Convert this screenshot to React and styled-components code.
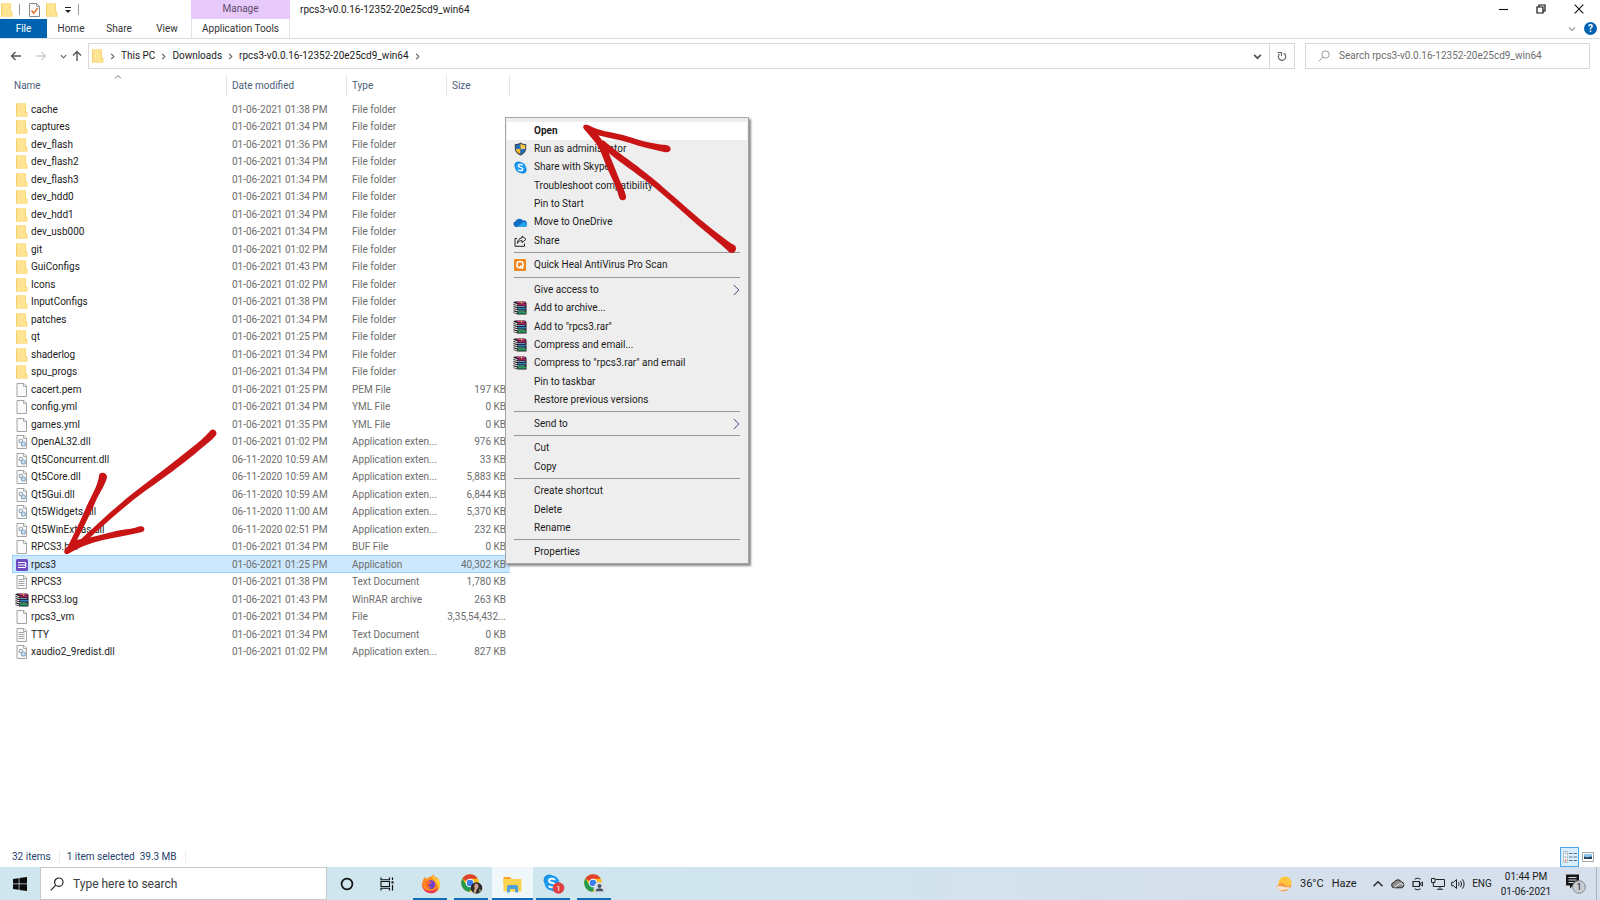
import React from 'react';
import styled, { createGlobalStyle, css } from 'styled-components';

const GlobalStyle = createGlobalStyle`
  *, *::before, *::after { box-sizing: border-box; }
  body { margin: 0; background: #fff; }
  body, button, input, table { font: 400 10px/16px Roboto, "Liberation Sans", sans-serif; color: #1b1b1b; }
  button { margin: 0; padding: 0; border: 0; background: none; }
  svg { display: block; flex: none; }
`;

/* ---------- icons ---------- */

const FolderIcon = () => (
  <svg width="12" height="14" viewBox="0 0 12 14">
    <path d="M.5 .5h9.500v8h1v5H.5z" fill="#ffe493" />
    <path d="M.5 .5v13" stroke="#f5cf66" />
    <path d="M.5 13.300h10.500M.5 .6h9" stroke="#f9dc86" strokeWidth=".8" />
    <path d="M9.500 .5v8.500M9 9h2v4.500" fill="none" stroke="#f9d570" strokeWidth=".9" />
  </svg>
);

const Sheet = ({ children }) => (
  <svg width="12" height="14" viewBox="0 0 12 14">
    <path d="M1 .5h7l2.500 2.500v10.500H1z" fill="#fbfbfb" stroke="#9a9a9a" strokeWidth=".9" />
    <path d="M7.500 .8v2.700h2.700" fill="none" stroke="#9a9a9a" strokeWidth=".8" />
    {children}
  </svg>
);

const DllIcon = () => (
  <Sheet>
    <circle cx="4.800" cy="6" r="1.800" fill="#e8eef2" stroke="#98a9b5" strokeWidth="1.100" />
    <circle cx="7.400" cy="9" r="2" fill="#cfe4f3" stroke="#86a6bf" strokeWidth="1.100" />
  </Sheet>
);

const TextIcon = () => (
  <Sheet>
    <path d="M2.500 4.500h6M2.500 6.500h6M2.500 8.500h6M2.500 10.500h6" stroke="#9b9b9b" strokeWidth=".9" />
  </Sheet>
);

const RarIcon = () => (
  <svg width="14" height="14" viewBox="0 0 14 14">
    <path d="M2.500 .5h9.500l1.500 1.500v11.500H4.500L.5 12V1z" fill="#231a1f" />
    <path d="M3 .8h8.500l1 1.500H5z" fill="#d23c88" />
    <path d="M5 2.800h8v1.700H5z" fill="#a81e5e" />
    <path d="M3 5.200h8.500l1 .9H5z" fill="#6fc3ee" />
    <path d="M5 6.800h8v1.700H5z" fill="#2d7fc4" />
    <path d="M3 9.500h8.500l1 .9H5z" fill="#5fd39a" />
    <path d="M5 10.900h8v1.700H5z" fill="#1f9b5f" />
    <path d="M.3 2.300l4 1.400M.3 4.500l4 .9M.3 6.500l4 1.300M.3 8.600l4 1.100M.3 10.700l4 1.500" stroke="#fff" strokeWidth="1" />
    <path d="M8 .6l1 2.300" stroke="#f0c34b" />
  </svg>
);

const RpcsIcon = () => (
  <svg width="12" height="12" viewBox="0 0 12 12">
    <rect width="12" height="12" rx="1.500" fill="#6d4bc3" />
    <path d="M2 3.500h6.500q1.500 0 1.500 1.200T8.500 6H2M8.500 6q1.500 0 1.500 1.200T8.500 8.500H2" fill="none" stroke="#fff" strokeWidth="1.100" />
  </svg>
);

const CheckDocIcon = () => (
  <svg width="11" height="14" viewBox="0 0 11 14">
    <path d="M.5 .5h7l3 3v10H.5z" fill="#fff" stroke="#8a8a8a" />
    <path d="M7.500 .5v3h3" fill="none" stroke="#8a8a8a" strokeWidth=".8" />
    <path d="M2.500 7.500l2.200 2.700L8.700 5" fill="none" stroke="#e0762b" strokeWidth="1.500" />
  </svg>
);

const CustomizeIcon = () => (
  <svg width="8" height="8" viewBox="0 0 8 8">
    <path d="M1 1.500h6" stroke="#222" />
    <path d="M1 4h6L4 7z" fill="#222" />
  </svg>
);

const Arrow = ({ dir, color }) => (
  <svg width="12" height="12" viewBox="0 0 12 12">
    <g transform={`rotate(${{ left: 0, up: 90, right: 180 }[dir]} 6 6)`}>
      <path d="M11 6H1.500M5.500 2L1.500 6l4 4" fill="none" stroke={color} strokeWidth="1.400" />
    </g>
  </svg>
);

const Chevron = ({ dir = 'down', size = 8, color = '#555', weight = 1.2 }) => (
  <svg width={size} height={size} viewBox="0 0 8 8">
    <g transform={`rotate(${{ down: 0, up: 180, right: -90 }[dir]} 4 4)`}>
      <path d="M1 2.500l3 3 3-3" fill="none" stroke={color} strokeWidth={weight} />
    </g>
  </svg>
);

const SubmenuIcon = () => (
  <svg width="7" height="12" viewBox="0 0 7 12">
    <path d="M.8 1l5 5-5 5" fill="none" stroke="#3e4a78" />
  </svg>
);

const RefreshIcon = () => (
  <svg width="10" height="11" viewBox="0 0 10 11">
    <path d="M2.500 3a3.700 3.700 0 1 0 4.200-.6" fill="none" stroke="#666" strokeWidth="1.200" />
    <path d="M.5 1.500h4v3.500" fill="none" stroke="#666" strokeWidth="1.200" />
  </svg>
);

const LensIcon = ({ size, color, weight }) => (
  <svg width={size} height={size} viewBox="0 0 14 14">
    <circle cx="8.800" cy="5.200" r="4.200" fill="none" stroke={color} strokeWidth={weight} />
    <path d="M5.800 8.200L.7 13.300" stroke={color} strokeWidth={weight} />
  </svg>
);

const MinimizeIcon = () => (
  <svg width="10" height="10" viewBox="0 0 10 10"><path d="M1 5.500h9" stroke="#111" strokeWidth="1.100" /></svg>
);
const RestoreIcon = () => (
  <svg width="10" height="10" viewBox="0 0 10 10">
    <path d="M1 3h6v6H1zM3 3V1h6v6H7" fill="none" stroke="#111" strokeWidth="1.200" />
  </svg>
);
const CloseIcon = () => (
  <svg width="10" height="10" viewBox="0 0 10 10"><path d="M.7 .7l8.600 8.600M9.300 .7L.7 9.300" stroke="#111" strokeWidth="1.100" /></svg>
);

const ShieldIcon = () => (
  <svg width="13" height="14" viewBox="0 0 13 14">
    <path d="M6.500 .5C5 1.600 3 2.100 .8 2.200v4.300c0 3.300 2.500 5.700 5.700 7 3.200-1.300 5.700-3.700 5.700-7V2.200C10 2.100 8 1.600 6.500 .5z" fill="#3b4653" />
    <path d="M6.500 1.700v5.300H1.800V3.200C3.500 3 5 2.600 6.500 1.700z" fill="#1f6fc0" />
    <path d="M6.500 1.700v5.300h4.700V3.200C9.500 3 8 2.600 6.500 1.700z" fill="#f7c948" />
    <path d="M6.500 7v5.300C4 11.200 2 9.500 1.800 7z" fill="#f7b92c" />
    <path d="M6.500 7v5.300c2.500-1.100 4.500-2.800 4.700-5.300z" fill="#1f6fc0" />
  </svg>
);

const SkypeMark = ({ size }) => (
  <svg width={size} height={size} viewBox="0 0 16 16">
    <circle cx="5.500" cy="5.500" r="5" fill="#1590e6" />
    <circle cx="10.500" cy="10.500" r="5" fill="#0f7fdc" />
    <circle cx="8" cy="8" r="6.600" fill="#1c9bf0" />
    <path d="M10.600 5.400C10 4.400 9 4.100 7.900 4.100c-1.500 0-2.500.7-2.500 1.800 0 2.700 5.300 1.300 5.300 4 0 1.200-1.200 2-2.700 2-1.300 0-2.300-.5-2.800-1.500" fill="none" stroke="#fff" strokeWidth="1.700" />
  </svg>
);

const OneDriveIcon = () => (
  <svg width="14" height="9" viewBox="0 0 14 9">
    <path d="M3 9a3 3 0 0 1-.6-5.800A4.400 4.400 0 0 1 10 2.500 3.300 3.300 0 0 1 11.500 9z" fill="#0f6cc0" />
    <path d="M4 9l5.500-4.500A3 3 0 0 1 14 7c0 1.200-1 2-2.200 2z" fill="#27a4ec" />
  </svg>
);

const ShareIcon = () => (
  <svg width="13" height="12" viewBox="0 0 13 12">
    <path d="M3 3.500H1v7.800h9.500V8.500" fill="none" stroke="#222" />
    <path d="M8 1l4 3.300-4 3.400V5.600C5.500 5.500 4.300 6.500 3.300 8.400 3.500 5 5.300 3.200 8 3z" fill="none" stroke="#222" />
  </svg>
);

const QuickHealIcon = () => (
  <svg width="12" height="12" viewBox="0 0 12 12">
    <rect width="12" height="12" rx="1" fill="#ee8a1d" />
    <circle cx="6" cy="5.700" r="3.100" fill="none" stroke="#fff" strokeWidth="1.500" />
    <path d="M6.300 6.500l2.700 3.300" stroke="#fff" strokeWidth="1.400" />
  </svg>
);

const DetailsViewIcon = () => (
  <svg width="14" height="12" viewBox="0 0 14 12">
    <path d="M.5 .5h4v11h-4z" fill="#fff" stroke="#a8b4bd" strokeWidth=".8" />
    <circle cx="2.500" cy="2.500" r=".9" fill="#9aaec0" />
    <circle cx="2.500" cy="6" r=".9" fill="#9aaec0" />
    <circle cx="2.500" cy="9.500" r=".9" fill="#c85a4a" />
    <path d="M6 2.500h3.500M10.500 2.500H14M6 6h3.500M10.500 6H14M6 9.500h3.500M10.500 9.500H14" stroke="#5f7484" />
  </svg>
);
const LargeViewIcon = () => (
  <svg width="12" height="10" viewBox="0 0 12 10">
    <path d="M.5 .5h11v9H.5z" fill="#fff" stroke="#a4a4a4" />
    <path d="M2 2h8v5H2z" fill="#8cc3ea" />
    <path d="M2 4.500l3 .8 5-.8V7H2z" fill="#24435f" />
  </svg>
);

const WindowsIcon = () => (
  <svg width="14" height="14" viewBox="0 0 14 14">
    <path d="M0 2l5.700-.8v5.400H0zM6.400 1.100L14 0v6.600H6.400zM0 7.300h5.700v5.400L0 12zM6.400 7.300H14V14l-7.600-1.100z" fill="#0b0b0b" />
  </svg>
);
const CortanaIcon = () => (
  <svg width="14" height="14" viewBox="0 0 14 14"><circle cx="7" cy="7" r="5.400" fill="none" stroke="#111" strokeWidth="1.700" /></svg>
);
const TaskViewIcon = () => (
  <svg width="14" height="14" viewBox="0 0 14 14">
    <path d="M1 .5v2.200h8.500V.5M1 13.500v-2.200h8.500v2.200M1 4.500h8.500v5H1z" fill="none" stroke="#111" strokeWidth="1.100" />
    <path d="M12.500 .5v2.500M12.500 8v5.500" stroke="#111" strokeWidth="1.200" />
    <path d="M11.500 4.300h2v2.200h-2z" fill="#111" />
  </svg>
);
const FirefoxIcon = () => (
  <svg width="20" height="20" viewBox="0 0 20 20">
    <path d="M2 6.500C2.300 5 3 4 4.200 2.800 4.400 4 5 4.600 6 5c1-1.500 2.600-2.300 4.500-2.500L12 .5c1.500 1.200 2.200 2.300 2.600 3.500l1-1c2.300 2.300 3.600 4.700 3.400 8.200C18.700 16 15 19.300 10.200 19.300S1 15.500 1 10.500C1 9 1.300 7.700 2 6.500z" fill="#ff8a1f" />
    <path d="M11.500 1c2 1.600 2.600 3.300 3 5 .7-.8.800-1.700.7-2.800 2.500 2.300 4 5 3.800 8-.2 2-1 3.800-2 5 .6-3-.2-6-2.500-8.500-1.800-2-3.500-3.700-3-6.700z" fill="#ffd23a" />
    <path d="M1.200 9c.3 5 3.500 8 8 8 3.500 0 6.300-1.500 7.800-4-.3 3.600-3.300 6.300-7 6.300-5 0-9.200-4-8.800-10.300z" fill="#f0315f" />
    <circle cx="10" cy="10.600" r="4.300" fill="#7542c8" />
    <path d="M4.500 7.500C7 6.800 9 7.500 10.800 8.600 9 9 9.200 10.200 7.500 10.600c-.5 2 1.200 2.900 3 2.700-3.500 2-6.500-.8-6-5.800z" fill="#ff6a2b" />
  </svg>
);

const ChromeBase = () => (
  <g>
    <circle cx="9" cy="9" r="8.800" fill="#fdbc0f" />
    <path d="M9 9L1.300 4.800A8.800 8.800 0 0 1 16.700 4.700H9z" fill="#e0402f" />
    <path d="M1.400 4.600A8.800 8.800 0 0 0 8.500 17.800L12.500 11 9 9 5.200 10.800z" fill="#249a50" />
    <circle cx="9" cy="9" r="4.300" fill="#fff" />
    <circle cx="9" cy="9" r="3.300" fill="#3b7ded" />
  </g>
);
const ChromePhotoIcon = () => (
  <svg width="22" height="20" viewBox="0 0 22 20">
    <ChromeBase />
    <circle cx="15.500" cy="14" r="5.800" fill="#2c2a2b" />
    <path d="M15 9.500c1.800 0 2.600 1.400 2.500 3-.1 1.400-.8 2.400-1.600 2.500l-1.200 4.400-2.200-1.200 1-3.600c-.7-2.800 0-5.100 1.500-5.100z" fill="#c9a08c" />
    <path d="M18 15l2.500 1-2 2.500z" fill="#8da26b" />
  </svg>
);
const ChromeGuestIcon = () => (
  <svg width="22" height="20" viewBox="0 0 22 20">
    <ChromeBase />
    <circle cx="15.500" cy="14" r="5.700" fill="#dfe3e8" stroke="#c3cad1" strokeWidth=".6" />
    <circle cx="15.500" cy="12" r="2" fill="#46566a" />
    <path d="M11.700 17.300c0-2.400 1.700-3 3.800-3s3.800.6 3.800 3z" fill="#46566a" />
  </svg>
);
const ExplorerIcon = () => (
  <svg width="19" height="18" viewBox="0 0 19 18">
    <path d="M.5 2h6.500l1.500 2H18v4H.5z" fill="#f3a92b" />
    <path d="M.5 4h18v12.500H.5z" fill="#fbd34f" />
    <path d="M4 17.500v-5.500q0-2 2-2h7q2 0 2 2v5.500h-2.800V14h-5.400v3.500z" fill="#4a9fdc" />
  </svg>
);
const SkypeTaskIcon = () => (
  <svg width="22" height="20" viewBox="0 0 22 20">
    <SkypeMark size={18} />
    <circle cx="15.500" cy="14" r="5.800" fill="#e03e3e" />
    <text x="15.500" y="17" textAnchor="middle" fontSize="8" fill="#fff">1</text>
  </svg>
);

const WeatherIcon = () => (
  <svg width="16" height="16" viewBox="0 0 16 16">
    <circle cx="9" cy="7" r="6.500" fill="#ffc53d" />
    <path d="M3 8.500c2-2.500 4.500-1.500 5.500 0s3.500 2 7 .5c-.5 2.500-2 3.500-4 3.500H3c-3 0-3.500-3 0-4z" fill="#f79a45" />
    <path d="M.8 9.500c2.500 1.300 4 .2 6.200 1s3.500 1 6.500 0c-1 2.500-3 4-6 4-3.500 0-6.700-1.500-6.700-5z" fill="#f7e6cf" />
    <path d="M3 13.500c2 1.200 4 .8 5.500.3s3-.5 4.300-1.300c-1 2-3 3-5.300 3-2 0-3.500-.8-4.500-2z" fill="#f3a256" />
  </svg>
);
const TrayCloudIcon = () => (
  <svg width="14" height="10" viewBox="0 0 14 10">
    <path d="M3.500 8.800a2.700 2.700 0 0 1-.3-5.400A4 4 0 0 1 10.500 3a3 3 0 0 1 .3 5.800z" fill="#909090" stroke="#222" />
    <path d="M3.500 8.300L9 4.500l3.500 1" stroke="#ececec" fill="none" />
  </svg>
);
const MeetNowIcon = () => (
  <svg width="12" height="14" viewBox="0 0 12 14">
    <path d="M2.500 2.200Q5.500 0 8.500 2.200M2.500 11.800Q5.500 14 8.500 11.800" fill="none" stroke="#222" />
    <path d="M1 4.500h6.500v5H1z" fill="none" stroke="#222" strokeWidth="1.200" />
    <path d="M7.500 7l3-2v4z" fill="none" stroke="#222" />
  </svg>
);
const NetworkIcon = () => (
  <svg width="14" height="12" viewBox="0 0 14 12">
    <path d="M4.500 1.500h9v7h-9M9 8.500v2.500M6 11.300h6" fill="none" stroke="#222" />
    <path d="M.5 .5h3.500v4H.5zM2.300 4.500v4h3" fill="none" stroke="#222" />
  </svg>
);
const SpeakerIcon = () => (
  <svg width="14" height="12" viewBox="0 0 14 12">
    <path d="M.7 4.200h2L5.500 1.500v9L2.700 7.800h-2z" fill="none" stroke="#222" />
    <path d="M7.500 4.300q1.200 1.700 0 3.400M9.500 2.800q2.200 3.200 0 6.400M11.500 1.300q3.200 4.700 0 9.400" fill="none" stroke="#222" />
  </svg>
);
const NotificationsIcon = () => (
  <svg width="20" height="20" viewBox="0 0 20 20">
    <path d="M0 .5h13v11H7l-3 3v-3H0z" fill="#161616" />
    <path d="M2.500 3.500h8M2.500 6h8M2.500 8.500h5" stroke="#d5e0ec" />
    <circle cx="13" cy="13" r="6.300" fill="#c9ccd0" stroke="#85888c" />
    <text x="13" y="16" textAnchor="middle" fontSize="9" fill="#111">1</text>
  </svg>
);

/* ---------- window frame ---------- */

const Desktop = styled.div`
  position: relative;
  display: flex;
  flex-direction: column;
  min-height: 100vh;
`;

const TitleBar = styled.header`
  display: flex;
  height: 19px;
`;

const QuickAccess = styled.div`
  display: flex;
  align-items: center;
  width: 191px;
  padding-left: 1px;
  gap: 6px;
`;

const Divider = styled.span`
  width: 1px;
  height: 11px;
  background: #9c9c9c;
  margin-right: ${(p) => (p.$wide ? 3 : 0)}px;
`;

const ContextLabel = styled.div`
  width: 99px;
  background: #e8c9fb;
  color: #5c4a68;
  text-align: center;
  line-height: 18px;
`;

const WindowTitle = styled.h1`
  flex: 1;
  margin: 0;
  padding: 2px 0 0 10px;
  font-size: 10px;
  font-weight: 400;
  line-height: 16px;
`;

const WindowButton = styled.button`
  display: grid;
  place-items: center;
  width: 38px;
  height: 17px;
`;

const WindowButtons = styled.div`
  display: flex;
  padding-right: 2px;
`;

const RibbonTabs = styled.nav`
  display: flex;
  height: 20px;
  border-bottom: 1px solid #dcdddf;
`;

const RibbonTab = styled.button`
  width: 48px;
  color: #333;
  ${(p) => p.$kind === 'file' && css`width: 47px; background: #0063b1; color: #fff;`}
  ${(p) => p.$kind === 'context' && css`width: 99px; border: solid #e3e3e6; border-width: 0 1px;`}
`;

const RibbonEnd = styled.div`
  display: flex;
  align-items: center;
  gap: 8px;
  margin-left: auto;
  padding-right: 3px;
`;

const HelpButton = styled.button`
  width: 13px;
  height: 13px;
  border-radius: 50%;
  background: #0063b1;
  color: #fff;
  font-weight: 700;
  line-height: 13px;
`;

const NavBar = styled.div`
  display: flex;
  align-items: center;
  padding: 4px 10px;
`;

const NavButton = styled.button`
  display: grid;
  place-items: center;
  width: ${(p) => p.$w}px;
  height: 24px;
`;

const NavButtons = styled.div`
  display: flex;
  width: 78px;
`;

const AddressBar = styled.div`
  display: flex;
  align-items: center;
  flex: 1;
  height: 26px;
  padding-left: 3px;
  border: 1px solid #d9d9d9;
`;

const Crumbs = styled.div`
  display: flex;
  align-items: center;
  flex: 1;
  gap: 5px;
`;

const RefreshButton = styled(NavButton)`
  border-left: 1px solid #d9d9d9;
`;

const SearchBox = styled.label`
  display: flex;
  align-items: center;
  gap: 9px;
  width: 285px;
  height: 26px;
  margin-left: 10px;
  padding-left: 12px;
  border: 1px solid #d9d9d9;
`;

const SearchInput = styled.input`
  flex: 1;
  min-width: 0;
  padding: 0;
  border: 0;
  outline: 0;
  background: none;
  &::placeholder { color: #6d6d6d; opacity: 1; }
`;

/* ---------- file list ---------- */

const FileArea = styled.main`
  flex: 1;
  padding-left: 12px;
`;

const FileTable = styled.table`
  width: 498px;
  table-layout: fixed;
  border-collapse: separate;
  border-spacing: 0;
`;

const HeadCell = styled.th`
  position: relative;
  width: ${(p) => p.$w}px;
  height: 27px;
  padding: 2px 0 4px;
  text-align: left;
  font-weight: 400;
  color: #4c607a;
`;

const HeadLabel = styled.div`
  padding: 3px 0 2px ${(p) => p.$pad}px;
  border-right: 1px solid #e5e5e5;
`;

const SortMark = styled.span`
  position: absolute;
  top: 0;
  left: 102px;
`;

const FileRow = styled.tr`
  height: 18px;
  &:nth-child(even) { height: 17px; }
  ${(p) => p.$selected && css`
    background: #cce8ff;
    td { box-shadow: inset 0 1px #99d1ff, inset 0 -1px #99d1ff; }
    td:first-child { box-shadow: inset 1px 1px #99d1ff, inset 0 -1px #99d1ff; }
  `}
`;

const Cell = styled.td`
  padding: 1px 4px 0 5px;
  white-space: nowrap;
  line-height: 16px;
  color: #6d6d6d;
`;

const NameCell = styled(Cell)`
  padding-left: 3px;
  color: #1b1b1b;
`;

const SizeCell = styled(Cell)`
  padding-left: 0;
  text-align: right;
`;

const NameContent = styled.div`
  display: flex;
  align-items: center;
  gap: 2px;
`;

const IconSlot = styled.span`
  display: grid;
  place-items: center;
  width: 14px;
  height: 14px;
`;

const StatusBar = styled.footer`
  display: flex;
  align-items: center;
  height: 20px;
  padding: 0 6px 0 12px;
  color: #26406b;
`;

const StatusItem = styled.span`
  padding-right: 8px;
  margin-right: 7px;
  border-right: 1px solid #ededed;
  line-height: 14px;
  white-space: pre;
`;

const ViewButtons = styled.div`
  display: flex;
  align-items: center;
  margin-left: auto;
  gap: 3px;
`;

const ViewButton = styled.button`
  display: grid;
  place-items: center;
  height: 20px;
  ${(p) => p.$active && css`width: 19px; border: 1px solid #4ba5e8; background: #d9eefc;`}
`;

/* ---------- context menu ---------- */

const Menu = styled.ul`
  position: absolute;
  top: 117px;
  left: 505px;
  width: 244px;
  margin: 0;
  padding: 4px 1px 2px;
  list-style: none;
  background: #eee;
  border: 1px solid #a5a5a5;
  box-shadow: 2px 2px 2px #8c8c8c;
`;

const MenuRow = styled.li`
  &:nth-child(3n) { padding-bottom: 1px; }
`;

const MenuButton = styled.button`
  display: flex;
  align-items: center;
  width: 100%;
  height: 18px;
  padding: 0 7px 0 6px;
  gap: 7px;
  text-align: left;
  background: ${(p) => (p.$active ? '#fff' : 'none')};
  font-weight: ${(p) => (p.$active ? 700 : 400)};
`;

const MenuText = styled.span`
  flex: 1;
`;

const MenuSeparator = styled.li`
  height: 6px;
  padding: 2px 7px 3px;
  &::before { content: ""; display: block; height: 1px; background: #979797; }
`;

/* ---------- taskbar ---------- */

const Taskbar = styled.div`
  display: flex;
  height: 33px;
  background: linear-gradient(90deg, #cfe6ef 0%, #cfe6ef 35%, #d5e0ec 75%);
`;

const TaskButton = styled.button`
  position: relative;
  display: grid;
  place-items: center;
  width: 40px;
`;

const RunningApps = styled.div`
  display: flex;
  margin-left: 3px;
`;

const AppButton = styled(TaskButton)`
  width: 41px;
  background: ${(p) => (p.$active ? '#eff7fb' : 'none')};
  &::after {
    content: "";
    position: absolute;
    bottom: 0;
    left: ${(p) => (p.$active ? 0 : 3)}px;
    right: ${(p) => (p.$active ? 0 : 4)}px;
    height: 2px;
    background: #0f6fb9;
  }
`;

const TaskSearch = styled.label`
  display: flex;
  align-items: center;
  gap: 9px;
  width: 287px;
  padding-left: 9px;
  background: #fff;
  border: 1px solid #c6c9cb;
`;

const TaskInput = styled(SearchInput)`
  font-size: 12px;
  &::placeholder { color: #3c3c3c; }
`;

const Tray = styled.div`
  display: flex;
  margin-left: auto;
`;

const Weather = styled.button`
  display: flex;
  align-items: center;
  width: 92px;
  font-size: 11px;
  gap: 8px;
`;

const TrayButton = styled.button`
  display: grid;
  place-items: center;
  width: ${(p) => p.$w || 20}px;
  line-height: 15px;
`;

const ShowDesktop = styled.button`
  width: 4px;
  border-left: 1px solid #a9b3bd;
`;

/* ---------- hand-drawn arrows ---------- */

const Marker = styled.svg`
  position: absolute;
  top: ${(p) => p.$top}px;
  left: ${(p) => p.$left}px;
  pointer-events: none;
`;

/* ---------- data ---------- */

const FILE_ICONS = { folder: FolderIcon, file: Sheet, dll: DllIcon, text: TextIcon, rar: RarIcon, rpcs: RpcsIcon };
const FOLDER = 'File folder';
const EXT = 'Application exten...';
const day = (t) => `01-06-2021 ${t} PM`;

const FILES = [
  ['folder', 'cache', day('01:38'), FOLDER],
  ['folder', 'captures', day('01:34'), FOLDER],
  ['folder', 'dev_flash', day('01:36'), FOLDER],
  ['folder', 'dev_flash2', day('01:34'), FOLDER],
  ['folder', 'dev_flash3', day('01:34'), FOLDER],
  ['folder', 'dev_hdd0', day('01:34'), FOLDER],
  ['folder', 'dev_hdd1', day('01:34'), FOLDER],
  ['folder', 'dev_usb000', day('01:34'), FOLDER],
  ['folder', 'git', day('01:02'), FOLDER],
  ['folder', 'GuiConfigs', day('01:43'), FOLDER],
  ['folder', 'Icons', day('01:02'), FOLDER],
  ['folder', 'InputConfigs', day('01:38'), FOLDER],
  ['folder', 'patches', day('01:34'), FOLDER],
  ['folder', 'qt', day('01:25'), FOLDER],
  ['folder', 'shaderlog', day('01:34'), FOLDER],
  ['folder', 'spu_progs', day('01:34'), FOLDER],
  ['file', 'cacert.pem', day('01:25'), 'PEM File', '197 KB'],
  ['file', 'config.yml', day('01:34'), 'YML File', '0 KB'],
  ['file', 'games.yml', day('01:35'), 'YML File', '0 KB'],
  ['dll', 'OpenAL32.dll', day('01:02'), EXT, '976 KB'],
  ['dll', 'Qt5Concurrent.dll', '06-11-2020 10:59 AM', EXT, '33 KB'],
  ['dll', 'Qt5Core.dll', '06-11-2020 10:59 AM', EXT, '5,883 KB'],
  ['dll', 'Qt5Gui.dll', '06-11-2020 10:59 AM', EXT, '6,844 KB'],
  ['dll', 'Qt5Widgets.dll', '06-11-2020 11:00 AM', EXT, '5,370 KB'],
  ['dll', 'Qt5WinExtras.dll', '06-11-2020 02:51 PM', EXT, '232 KB'],
  ['file', 'RPCS3.buf', day('01:34'), 'BUF File', '0 KB'],
  ['rpcs', 'rpcs3', day('01:25'), 'Application', '40,302 KB', true],
  ['text', 'RPCS3', day('01:38'), 'Text Document', '1,780 KB'],
  ['rar', 'RPCS3.log', day('01:43'), 'WinRAR archive', '263 KB'],
  ['file', 'rpcs3_vm', day('01:34'), 'File', '3,35,54,432...'],
  ['text', 'TTY', day('01:34'), 'Text Document', '0 KB'],
  ['dll', 'xaudio2_9redist.dll', day('01:02'), EXT, '827 KB'],
];

const SkypeSmall = () => <SkypeMark size={13} />;

const MENU = [
  { text: 'Open', active: true },
  { text: 'Run as administrator', Icon: ShieldIcon },
  { text: 'Share with Skype', Icon: SkypeSmall },
  { text: 'Troubleshoot compatibility' },
  { text: 'Pin to Start' },
  { text: 'Move to OneDrive', Icon: OneDriveIcon },
  { text: 'Share', Icon: ShareIcon },
  null,
  { text: 'Quick Heal AntiVirus Pro Scan', Icon: QuickHealIcon },
  null,
  { text: 'Give access to', sub: true },
  { text: 'Add to archive...', Icon: RarIcon },
  { text: 'Add to "rpcs3.rar"', Icon: RarIcon },
  { text: 'Compress and email...', Icon: RarIcon },
  { text: 'Compress to "rpcs3.rar" and email', Icon: RarIcon },
  { text: 'Pin to taskbar' },
  { text: 'Restore previous versions' },
  null,
  { text: 'Send to', sub: true },
  null,
  { text: 'Cut' },
  { text: 'Copy' },
  null,
  { text: 'Create shortcut' },
  { text: 'Delete' },
  { text: 'Rename' },
  null,
  { text: 'Properties' },
];

const CRUMBS = ['This PC', 'Downloads', 'rpcs3-v0.0.16-12352-20e25cd9_win64'];

const APPS = [
  { name: 'Firefox', Icon: FirefoxIcon },
  { name: 'Chrome', Icon: ChromePhotoIcon },
  { name: 'File Explorer', Icon: ExplorerIcon, active: true },
  { name: 'Skype', Icon: SkypeTaskIcon },
  { name: 'Chrome guest', Icon: ChromeGuestIcon },
];

const TRAY = [
  ['Hidden icons', () => <Chevron dir="up" size={12} color="#222" weight={0.9} />],
  ['OneDrive', TrayCloudIcon],
  ['Meet Now', MeetNowIcon],
  ['Network', NetworkIcon],
  ['Volume', SpeakerIcon],
];

/* ---------- page ---------- */

const Header = () => (
  <>
    <TitleBar>
      <QuickAccess>
        <FolderIcon />
        <Divider $wide />
        <CheckDocIcon />
        <FolderIcon />
        <CustomizeIcon />
        <Divider />
      </QuickAccess>
      <ContextLabel>Manage</ContextLabel>
      <WindowTitle>rpcs3-v0.0.16-12352-20e25cd9_win64</WindowTitle>
      <WindowButtons>
        <WindowButton aria-label="Minimize"><MinimizeIcon /></WindowButton>
        <WindowButton aria-label="Restore"><RestoreIcon /></WindowButton>
        <WindowButton aria-label="Close"><CloseIcon /></WindowButton>
      </WindowButtons>
    </TitleBar>
    <RibbonTabs>
      <RibbonTab $kind="file">File</RibbonTab>
      <RibbonTab>Home</RibbonTab>
      <RibbonTab>Share</RibbonTab>
      <RibbonTab>View</RibbonTab>
      <RibbonTab $kind="context">Application Tools</RibbonTab>
      <RibbonEnd>
        <Chevron color="#9a9a9a" />
        <HelpButton aria-label="Help">?</HelpButton>
      </RibbonEnd>
    </RibbonTabs>
    <NavBar>
      <NavButtons>
        <NavButton $w={12} aria-label="Back"><Arrow dir="left" color="#555" /></NavButton>
        <NavButton $w={38} aria-label="Forward"><Arrow dir="right" color="#cfcfcf" /></NavButton>
        <NavButton $w={7} aria-label="Recent locations"><Chevron size={7} /></NavButton>
        <NavButton $w={20} aria-label="Up"><Arrow dir="up" color="#555" /></NavButton>
      </NavButtons>
      <AddressBar>
        <Crumbs>
          <FolderIcon />
          <Chevron dir="right" size={7} />
          {CRUMBS.map((c) => (
            <React.Fragment key={c}>
              <button>{c}</button>
              <Chevron dir="right" size={7} />
            </React.Fragment>
          ))}
        </Crumbs>
        <NavButton $w={24} aria-label="Previous locations"><Chevron size={9} weight={1.5} /></NavButton>
        <RefreshButton $w={25} aria-label="Refresh"><RefreshIcon /></RefreshButton>
      </AddressBar>
      <SearchBox>
        <LensIcon size={12} color="#8c8c8c" weight={1} />
        <SearchInput aria-label="Search folder" placeholder="Search rpcs3-v0.0.16-12352-20e25cd9_win64" />
      </SearchBox>
    </NavBar>
  </>
);

const Files = () => (
  <FileArea>
    <FileTable>
      <thead>
        <tr>
          <HeadCell $w={215}><HeadLabel $pad={2}>Name</HeadLabel><SortMark><Chevron dir="up" color="#777" weight={1} /></SortMark></HeadCell>
          <HeadCell $w={120}><HeadLabel $pad={5}>Date modified</HeadLabel></HeadCell>
          <HeadCell $w={100}><HeadLabel $pad={5}>Type</HeadLabel></HeadCell>
          <HeadCell $w={63}><HeadLabel $pad={5}>Size</HeadLabel></HeadCell>
        </tr>
      </thead>
      <tbody>
        {FILES.map(([icon, name, date, type, size, selected]) => {
          const Icon = FILE_ICONS[icon];
          return (
            <FileRow key={name} $selected={selected}>
              <NameCell><NameContent><IconSlot><Icon /></IconSlot>{name}</NameContent></NameCell>
              <Cell>{date}</Cell>
              <Cell>{type}</Cell>
              <SizeCell>{size}</SizeCell>
            </FileRow>
          );
        })}
      </tbody>
    </FileTable>
  </FileArea>
);

const ContextMenu = () => (
  <Menu>
    {MENU.map((m, i) =>
      m ? (
        <MenuRow key={m.text}>
          <MenuButton $active={m.active}>
            <IconSlot>{m.Icon && <m.Icon />}</IconSlot>
            <MenuText>{m.text}</MenuText>
            {m.sub && <SubmenuIcon />}
          </MenuButton>
        </MenuRow>
      ) : (
        <MenuSeparator key={i} role="separator" />
      )
    )}
  </Menu>
);

const Arrows = () => (
  <>
    <Marker $left={60} $top={425} width="160" height="132" viewBox="60 425 160 132" fill="#c81414">
      <path d="M210.500 430.500C212 428 217 430 216.500 434C215 438 205 445 196 453C180 466 165 477 145 491C126 505 108 521 82 545L79 541C104 518 121 502 141 487C158 474 175 461 190 449C198 443 205 437 210.500 430.500Z" />
      <path d="M99 476C99 471 107 472 107 477C106 484 99 493 95 503C89 517 81 532 73 548L66 550C73 536 79 524 85 510C90 498 98 486 99 476Z" />
      <path d="M139 526.500C145 525 146 531 142 532C131 535 116 537 103 540C90 543 80 547 68 554C64 555 63 551 66 548L76 540C90 538 103 534 116 531C126 529 133 529 139 526.500Z" />
    </Marker>
    <Marker $left={580} $top={120} width="162" height="136" viewBox="580 120 162 136" fill="#c81414">
      <path d="M736 249C735 254 730 254 727 250C714 238 699 227 684 213C668 199 655 187 638 175C626 166 613 157 599 145L603 140C618 153 630 160 642 170C659 183 672 195 688 209C704 223 718 234 732 244C735 245 736 246 736 249Z" />
      <path d="M664 152C653 149 641 147 630 143C617 139 604 137 592 134L584 129C582 126 584 124 588 125C599 131 611 132 623 135C636 139 651 144 666 145C673 146 672 154 664 152Z" />
      <path d="M584 129L590 126C597 132 603 141 608 151C612 161 616 171 620 181C623 187 625 192 626 196C627 201 620 202 619 197C617 188 612 179 608 170C603 158 600 148 595 142Z" />
    </Marker>
  </>
);

export default function App() {
  return (
    <Desktop>
      <GlobalStyle />
      <Header />
      <Files />
      <StatusBar>
        <StatusItem>32 items</StatusItem>
        <StatusItem>{'1 item selected  39.3 MB'}</StatusItem>
        <ViewButtons>
          <ViewButton $active aria-label="Details view"><DetailsViewIcon /></ViewButton>
          <ViewButton aria-label="Large icons view"><LargeViewIcon /></ViewButton>
        </ViewButtons>
      </StatusBar>
      <Taskbar>
        <TaskButton aria-label="Start"><WindowsIcon /></TaskButton>
        <TaskSearch>
          <LensIcon size={14} color="#222" weight={1.2} />
          <TaskInput aria-label="Search" placeholder="Type here to search" />
        </TaskSearch>
        <TaskButton aria-label="Cortana"><CortanaIcon /></TaskButton>
        <TaskButton aria-label="Task View"><TaskViewIcon /></TaskButton>
        <RunningApps>
          {APPS.map(({ name, Icon, active }) => (
            <AppButton key={name} $active={active} aria-label={name}><Icon /></AppButton>
          ))}
        </RunningApps>
        <Tray>
          <Weather><WeatherIcon /><span>36°C</span><span>Haze</span></Weather>
          {TRAY.map(([name, Icon]) => (
            <TrayButton key={name} aria-label={name}><Icon /></TrayButton>
          ))}
          <TrayButton $w={28}>ENG</TrayButton>
          <TrayButton $w={60}><span>01:44 PM<br />01-06-2021</span></TrayButton>
          <TrayButton $w={40} aria-label="Notifications"><NotificationsIcon /></TrayButton>
          <ShowDesktop aria-label="Show desktop" />
        </Tray>
      </Taskbar>
      <ContextMenu />
      <Arrows />
    </Desktop>
  );
}
